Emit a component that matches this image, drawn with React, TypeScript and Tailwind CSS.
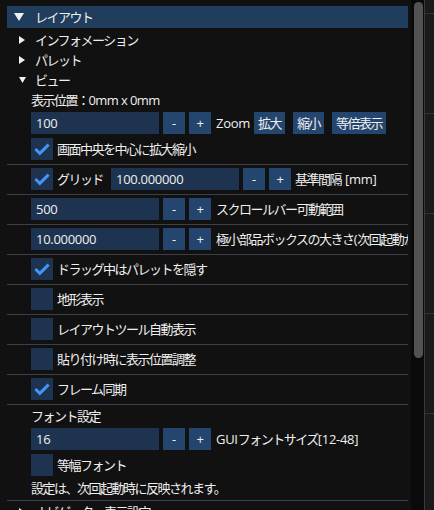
import React from "react";

const CJK = /([\u3000-\u30ff\u3400-\u9fff\uff00-\uffef]+)/;

// Japanese runs are squeezed to match the narrow kana/kanji of the original GUI font
function T({ s, tight }: { s: string; tight?: boolean }) {
  return (
    <>
      {s.split(CJK).map((part, i) =>
        part === "" ? null : i % 2 === 1 ? (
          <span key={i} className="tracking-[-1.5px]">{part}</span>
        ) : (
          <span key={i} className={tight ? "tracking-[-0.6px]" : "tracking-[-0.3px]"}>{part}</span>
        )
      )}
    </>
  );
}

const Sep = () => <div className="h-px -mb-px -ml-px bg-[#3e3e47]" />;

function Check({ on }: { on?: boolean }) {
  return (
    <div className="w-[22px] h-[22px] shrink-0 bg-[#1e3350]">
      {on && (
        <svg width="22" height="22" viewBox="0 0 22 22">
          <polyline points="4.4,11 8.8,15.4 17.6,6.6" fill="none" stroke="#4296fa" strokeWidth="2.9" />
        </svg>
      )}
    </div>
  );
}

function Btn({ label, w }: { label: string; w?: string }) {
  return (
    <div className={`h-full shrink-0 bg-[#24456d] flex items-center justify-center px-[4px] ${w ?? ""}`}>
      <T s={label} />
    </div>
  );
}

function Field({ value }: { value: string }) {
  return (
    <div className="w-[128px] h-full shrink-0 bg-[#1e3350] flex items-center pl-[5px]">
      <T s={value} />
    </div>
  );
}

function NumRow({ value, label, children }: { value: string; label: string; children?: React.ReactNode }) {
  return (
    <div className="h-[22px] flex items-center gap-[4px] pl-[24px]">
      <Field value={value} />
      <Btn label="-" w="w-[22px]" />
      <Btn label="+" w="w-[22px]" />
      <span className="ml-px"><T s={label} /></span>
      {children}
    </div>
  );
}

function CheckRow({ on, label }: { on?: boolean; label: string }) {
  return (
    <div className="h-[22px] flex items-center gap-[4px] pl-[24px]">
      <Check on={on} />
      <T s={label} />
    </div>
  );
}

function TreeRow({ open, label }: { open?: boolean; label: string }) {
  return (
    <div className="h-[16px] flex items-center">
      {open ? (
        <svg className="ml-[12px] mr-[9px]" width="7" height="6" viewBox="0 0 7 6">
          <polygon points="0,0 7,0 3.5,6" fill="#efefef" />
        </svg>
      ) : (
        <svg className="ml-[12px] mr-[10px]" width="6" height="8" viewBox="0 0 6 8">
          <polygon points="0,0 6,4 0,8" fill="#efefef" />
        </svg>
      )}
      <T s={label} />
    </div>
  );
}

const Text = ({ s, tight }: { s: string; tight?: boolean }) => (
  <div className="h-[16px] flex items-center pl-[24px]">
    <T s={s} tight={tight} />
  </div>
);

export default function App() {
  return (
    <div
      className="flex w-[434px] h-[510px] overflow-hidden bg-[#111111] text-[13px] leading-[16px] text-[#efefef]"
      style={{ fontFamily: '"Open Sans", "Noto Sans CJK JP", sans-serif' }}
    >
      <div className="w-[7px] shrink-0" />

      {/* main window content */}
      <div className="w-[401px] shrink-0 flex flex-col gap-[4px] pt-[6px] overflow-hidden whitespace-nowrap *:shrink-0">
        <div className="h-[22px] bg-[#213d5e] flex items-center">
          <svg className="ml-[7px] mr-[11px]" width="10" height="8" viewBox="0 0 10 8">
            <polygon points="0,0 10,0 5,8" fill="#efefef" />
          </svg>
          <T s="レイアウト" />
        </div>
        <TreeRow label="インフォメーション" />
        <TreeRow label="パレット" />
        <TreeRow open label="ビュー" />
        <Text s="表示位置：0mm x 0mm" tight />
        <NumRow value="100" label="Zoom">
          <Btn label="拡大" />
          <Btn label="縮小" w="ml-[4px]" />
          <Btn label="等倍表示" w="ml-[4px]" />
        </NumRow>
        <CheckRow on label="画面中央を中心に拡大縮小" />
        <Sep />
        <div className="h-[22px] flex items-center gap-[4px] pl-[24px]">
          <Check on />
          <span className="w-[50px] shrink-0"><T s="グリッド" /></span>
          <Field value="100.000000" />
          <Btn label="-" w="w-[22px]" />
          <Btn label="+" w="w-[22px]" />
          <T s="基準間隔[mm]" />
        </div>
        <Sep />
        <NumRow value="500" label="スクロールバー可動範囲" />
        <Sep />
        <NumRow value="10.000000" label="極小部品ボックスの大きさ(次回起動から有効)" />
        <Sep />
        <CheckRow on label="ドラッグ中はパレットを隠す" />
        <Sep />
        <CheckRow label="地形表示" />
        <Sep />
        <CheckRow label="レイアウトツール自動表示" />
        <Sep />
        <CheckRow label="貼り付け時に表示位置調整" />
        <Sep />
        <CheckRow on label="フレーム同期" />
        <Sep />
        <Text s="フォント設定" />
        <NumRow value="16" label="GUIフォントサイズ[12-48]" />
        <CheckRow label="等幅フォント" />
        <Text s="設定は、次回起動時に反映されます。" />
        <Sep />
        <TreeRow label="ナビゲーター表示設定" />
      </div>

      <div className="w-[3px] shrink-0" />

      {/* scrollbar */}
      <div className="w-[13px] shrink-0 bg-[#0a0a0a] pt-[2px] pl-[3px]">
        <div className="w-[9px] h-[356px] rounded-full bg-[#525252]" />
      </div>
      <div className="w-px shrink-0 bg-[#3a3a3a]" />

      {/* window behind */}
      <div className="w-[9px] shrink-0 bg-[#1a1a1a] flex flex-col gap-[99px] pt-[13px]">
        <div className="h-px bg-[#333333]" />
        <div className="h-px bg-[#333333]" />
        <div className="h-px bg-[#333333]" />
        <div className="h-px bg-[#333333]" />
        <div className="h-px bg-[#333333]" />
      </div>
    </div>
  );
}
